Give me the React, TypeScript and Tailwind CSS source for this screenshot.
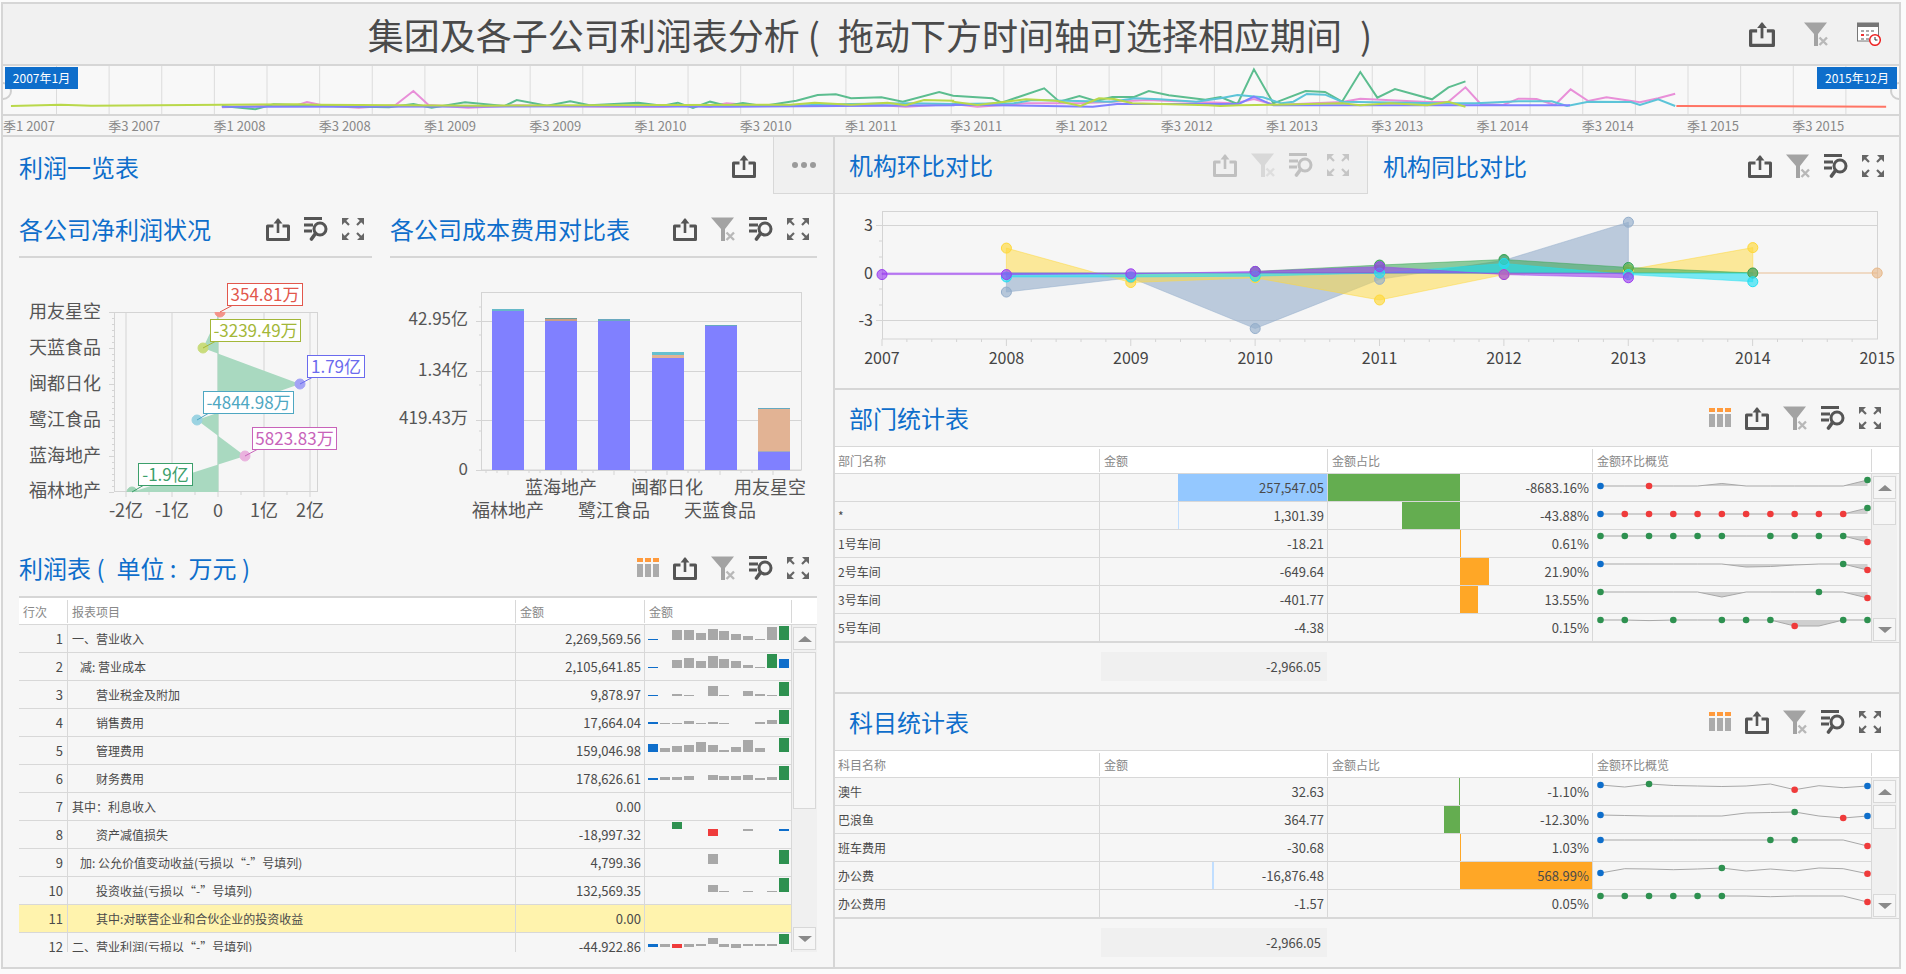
import React from "react";

function Share({ w = 24, h = 24, c = "#555" }: { w?: number; h?: number; c?: string }) {
  return (
    <svg width={w} height={h} viewBox="0 0 24 24" className="shrink-0">
      <path d="M7.5 9H1.5V22.5H22.5V9H16.5" fill="none" stroke={c} strokeWidth="3" strokeLinejoin="round" />
      <path d="M12 16V2.5" fill="none" stroke={c} strokeWidth="2.6" />
      <path d="M7.5 6.5L12 1L16.5 6.5Z" fill={c} />
    </svg>
  );
}
function FilterX({ w = 24, h = 24 }: { w?: number; h?: number }) {
  return (
    <svg width={w} height={h} viewBox="0 0 24 24" className="shrink-0">
      <path d="M0 0.5H23L14 12V24H10V12Z" fill="#a3a3a3" />
      <path d="M15.5 15.5L23 23M23 15.5L15.5 23" stroke="#b8b8b8" strokeWidth="2.4" fill="none" />
    </svg>
  );
}
function SearchList({ c = "#555" }: { c?: string }) {
  return (
    <svg width={24} height={24} viewBox="0 0 24 24" className="shrink-0">
      <path d="M0 1.5H18M0 8H9M0 14H8" stroke={c} strokeWidth="2.8" fill="none" />
      <circle cx="16" cy="12" r="6" fill="none" stroke={c} strokeWidth="3" />
      <path d="M11.5 16.5L7.5 22" stroke={c} strokeWidth="3.6" strokeLinecap="round" />
    </svg>
  );
}
function Expand({ c = "#666" }: { c?: string }) {
  return (
    <svg width={22} height={22} viewBox="0 0 22 22" className="shrink-0">
      <path d="M0 0H7L0 7ZM22 0H15L22 7ZM0 22H7L0 15ZM22 22H15L22 15Z" fill={c} />
      <path d="M2 2L7 7M20 2L15 7M2 20L7 15M20 20L15 15" stroke={c} strokeWidth="2.2" />
    </svg>
  );
}
function Columns() {
  return (
    <svg width={22} height={20} viewBox="0 0 22 20" className="shrink-0">
      <path d="M0 0H6V4H0ZM8 0H14V4H8ZM16 0H22V4H16Z" fill="#ff9a3c" />
      <path d="M0 6H6V19H0ZM8 6H14V19H8ZM16 6H22V19H16Z" fill="#ababab" />
    </svg>
  );
}
function Calendar() {
  return (
    <svg width={24} height={24} viewBox="0 0 24 24" className="shrink-0">
      <rect x="0.5" y="1" width="21" height="18" fill="#fff" stroke="#777" />
      <rect x="0.5" y="1" width="21" height="4" fill="#777" />
      <path d="M4 8h3v2H4zM9 8h3v2H9zM14 8h3v2h-3zM4 12h3v2H4zM9 12h3v2H9zM4 16h3v2H4zM9 16h3v2H9z" fill="#aaa" />
      <path d="M4 12h3v2H4z" fill="#e33" />
      <circle cx="18" cy="18" r="5.3" fill="#fff" stroke="#e22" strokeWidth="1.5" />
      <path d="M18 15V18H20.5" fill="none" stroke="#333" strokeWidth="1" />
    </svg>
  );
}

function Heading({ children }: { children: React.ReactNode }) {
  return <div className="text-[24px] leading-[32px] text-[#0e6ecb] whitespace-nowrap">{children}</div>;
}

/* ---------- timeline ---------- */
type Z = [number, number][];
const tl = (a: Z, b: Z) =>
  [...a.map(([x, y]) => `${x / 1.645},${y / 3}`), ...b.map(([x, y]) => `${953 + x / 1.645},${y / 3}`)].join(" ");

const tlSeries: { c: string; pts: string }[] = [
  {
    c: "#e88fd8",
    pts: tl(
      [[365,322],[490,315],[505,306],[530,316],[590,323],[650,316],[680,273],[705,315],[770,323],[850,316],[900,318],[1000,320],[1090,320],[1140,316],[1168,320],[1195,310],[1255,318],[1450,316],[1490,320],[1568,312]],
      [[0,312],[40,320],[120,310],[210,310],[320,300],[400,306],[465,310],[495,297],[530,315],[640,306],[670,296],[780,306],[815,305],[843,262],[868,312],[905,315],[930,296],[960,297],[990,315],[1016,268],[1045,303],[1075,292],[1130,307],[1160,295],[1188,281]]
    ),
  },
  {
    c: "#5cbd8f",
    pts: tl(
      [[365,318],[420,328],[450,313],[530,318],[640,322],[680,312],[710,323],[765,307],[830,318],[850,300],[900,317],[938,304],[970,316],[1050,308],[1090,317],[1115,308],[1140,324],[1168,305],[1195,317],[1222,309],[1255,318],[1310,302],[1345,285],[1375,283],[1400,295],[1450,292],[1485,305],[1545,276],[1568,287]],
      [[0,287],[65,295],[80,308],[150,265],[175,305],[208,288],[235,303],[262,291],[298,291],[322,273],[355,286],[415,299],[440,291],[468,312],[495,208],[527,310],[580,273],[612,276],[640,305],[670,216],[698,293],[727,267],[788,298],[815,262],[843,244]]
    ),
  },
  {
    c: "#5cc4d8",
    pts: tl(
      [[1000,318],[1290,317],[1400,312],[1500,310],[1568,312]],
      [[0,312],[100,310],[130,300],[260,305],[300,295],[340,298],[400,305],[440,295],[468,285],[510,292],[540,310],[560,305],[582,282],[612,284],[640,305],[800,310],[860,310],[930,304],[985,304],[1010,318],[1045,305],[1115,306],[1130,315],[1160,298],[1188,318]]
    ),
  },
  {
    c: "#8080ff",
    pts: tl(
      [[365,320],[1000,319],[1200,320],[1568,316]],
      [[0,314],[230,320],[270,312],[470,312],[495,290],[527,316],[700,316],[1015,316]]
    ),
  },
  {
    c: "#b9d84a",
    pts: tl(
      [[18,318],[100,314],[150,317],[490,313],[520,314],[800,317],[1300,314],[1340,308],[1400,314],[1460,308],[1490,316],[1520,300],[1568,302]],
      [[0,305],[40,315],[120,298],[170,302],[210,318],[240,295],[265,297],[295,310],[420,316],[440,318],[470,316],[527,314],[640,310],[670,316],[720,310],[780,316],[815,305],[843,320]]
    ),
  },
  { c: "#ff7565", pts: tl([], [[1190,318],[1535,320]]) },
];

function Timeline() {
  const labels: string[] = [];
  for (let y = 2007; y <= 2015; y++) labels.push(`季1 ${y}`, `季3 ${y}`);
  const grid = Array.from({ length: 35 }, (_, k) => 56.5 + 52.63 * k);
  return (
    <>
      <div className="relative h-[50px] bg-[#f8f8f8] border-b-2 border-[#d6d6d6] overflow-hidden">
        <svg width={1896} height={48} viewBox="3 66 1896 48" className="block">
          {grid.map((x) => (
            <line key={x} x1={x} x2={x} y1={66} y2={114} stroke="#dcdcdc" />
          ))}
          {tlSeries.map((s) => (
            <polyline key={s.c} points={s.pts} fill="none" stroke={s.c} strokeWidth="2" />
          ))}
          <circle cx="3" cy="91" r="8" fill="#f8f8f8" stroke="#cfcfcf" strokeWidth="2" />
          <circle cx="1899" cy="91" r="8" fill="#f8f8f8" stroke="#cfcfcf" strokeWidth="2" />
        </svg>
        <div className="absolute left-[2px] top-[1px] w-[73px] h-[22px] bg-[#0e6ecb] text-white text-[12px] leading-[22px] text-center">2007年1月</div>
        <div className="absolute left-[1814px] top-[1px] w-[80px] h-[22px] bg-[#0e6ecb] text-white text-[12px] leading-[22px] text-center">2015年12月</div>
      </div>
      <div className="flex h-[21px] border-b-2 border-[#d6d6d6] bg-[#f6f6f6] overflow-hidden">
        {labels.map((l) => (
          <div key={l} className="w-[105.26px] shrink-0 text-[13px] leading-[19px] text-[#888] whitespace-nowrap">{l}</div>
        ))}
      </div>
    </>
  );
}

/* ---------- charts ---------- */
function NetProfitChart() {
  const cats = ["用友星空", "天蓝食品", "闽都日化", "鹭江食品", "蓝海地产", "福林地产"];
  const ys = [311, 347, 383, 419, 455, 490];
  const pts: [number, number, string][] = [
    [220, 312, "#f4938a"],
    [203, 348, "#c9dc7c"],
    [300, 384, "#a3a3f5"],
    [197, 420, "#9bd3e2"],
    [245, 456, "#eab2de"],
    [132, 492, "#9fd3b5"],
  ];
  const boxes: [number, number, number, string, string, number, number][] = [
    [227, 283, 76, "354.81万", "#e2574c", 220, 312],
    [210, 319, 91, "-3239.49万", "#a3b738", 203, 348],
    [307, 355, 58, "1.79亿", "#6b6bee", 300, 384],
    [203, 391, 91, "-4844.98万", "#4ea7c2", 197, 420],
    [252, 427, 85, "5823.83万", "#c863ba", 245, 456],
    [138, 463, 55, "-1.9亿", "#3c9f6b", 132, 492],
  ];
  const minor = Array.from({ length: 31 }, (_, i) => 312 + i * 6);
  return (
    <svg width={353} height={282} viewBox="19 258 353 282" className="block">
      <defs>
        <clipPath id="cp1"><rect x="114" y="312" width="204" height="180" /></clipPath>
      </defs>
      <rect x="114.5" y="312.5" width="203" height="179" fill="none" stroke="#d4d4d4" />
      {[126, 172, 218, 264, 310].map((x) => (
        <g key={x}>
          <line x1={x} x2={x} y1={312} y2={497} stroke="#d4d4d4" />
          <text x={x} y={517} fontSize="18" fill="#555" textAnchor="middle">
            {x === 126 ? "-2亿" : x === 172 ? "-1亿" : x === 218 ? "0" : x === 264 ? "1亿" : "2亿"}
          </text>
        </g>
      ))}
      {[149, 195, 241, 287].map((x) => (
        <line key={x} x1={x} x2={x} y1={492} y2={495} stroke="#d4d4d4" />
      ))}
      {minor.map((y) => (
        <line key={y} x1={(y - 312) % 36 === 0 ? 109 : 112} x2={114} y1={y + 0.5} y2={y + 0.5} stroke="#d4d4d4" />
      ))}
      {cats.map((c, i) => (
        <text key={c} x={101} y={ys[i] + 7} fontSize="18" fill="#555" textAnchor="end">{c}</text>
      ))}
      <g clipPath="url(#cp1)">
        <polygon points={`218,312 ${pts.map((p) => `${p[0]},${p[1]}`).join(" ")} 218,492`} fill="#a9d9c0" />
        <line x1={218} x2={218} y1={312} y2={492} stroke="#a9d9c0" />
        {pts.map((p) => (
          <circle key={p[1]} cx={p[0]} cy={p[1]} r="5" fill={p[2]} stroke={p[2]} strokeWidth="1" />
        ))}
      </g>
      {boxes.map(([x, y, w, t, c, px, py]) => (
        <g key={t}>
          <line x1={px} y1={py} x2={x + 6} y2={y + 22} stroke={c} />
          <rect x={x + 0.5} y={y + 0.5} width={w - 1} height={22} fill="#fff" stroke={c} />
          <text x={x + w / 2} y={y + 17.5} fontSize="17" fill={c} textAnchor="middle">{t}</text>
        </g>
      ))}
    </svg>
  );
}

function CostChart() {
  const bars: { x: number; segs: [number, number, string][] }[] = [
    { x: 492, segs: [[309, 311, "#66b9c9"], [311, 470, "#8080ff"]] },
    { x: 545, segs: [[318, 319, "#6c9c9c"], [319, 321, "#c99f86"], [321, 470, "#8080ff"]] },
    { x: 598, segs: [[319, 321, "#6aa9c0"], [321, 470, "#8080ff"]] },
    { x: 652, segs: [[352, 355, "#66c0d0"], [355, 358, "#e2b394"], [358, 470, "#8080ff"]] },
    { x: 705, segs: [[325, 326, "#66a9c0"], [326, 470, "#8080ff"]] },
    { x: 758, segs: [[408, 409, "#66a9c0"], [409, 451, "#e2b394"], [451, 452, "#a8a8b8"], [452, 470, "#8080ff"]] },
  ];
  const top: [number, string][] = [[561, "蓝海地产"], [667, "闽都日化"], [770, "用友星空"]];
  const bottom: [number, string][] = [[508, "福林地产"], [614, "鹭江食品"], [720, "天蓝食品"]];
  const yl: [number, string][] = [[325, "42.95亿"], [376, "1.34亿"], [424, "419.43万"], [475, "0"]];
  return (
    <svg width={427} height={282} viewBox="390 258 427 282" className="block">
      <rect x="481.5" y="292.5" width="320" height="177.5" fill="none" stroke="#d4d4d4" />
      {[321, 371, 420, 470].map((y) => (
        <line key={y} x1={476} x2={801} y1={y + 0.5} y2={y + 0.5} stroke="#d4d4d4" />
      ))}
      {[335, 385, 431, 450, 307].map((y) => (
        <line key={y} x1={479} x2={481} y1={y} y2={y} stroke="#d4d4d4" />
      ))}
      {[508, 561, 614, 667, 720, 773].map((x) => (
        <line key={x} x1={x} x2={x} y1={470} y2={475} stroke="#d4d4d4" />
      ))}
      {[486, 497, 529, 540, 582, 593, 635, 646, 688, 699, 741, 752].map((x) => (
        <line key={x} x1={x} x2={x} y1={470} y2={473} stroke="#d4d4d4" />
      ))}
      {bars.map((b) =>
        b.segs.map(([a, z, c]) => <rect key={`${b.x}${a}`} x={b.x} y={a} width={32} height={z - a} fill={c} />)
      )}
      {yl.map(([y, t]) => (
        <text key={t} x={468} y={y} fontSize="17" fill="#555" textAnchor="end">{t}</text>
      ))}
      {top.map(([x, t]) => (
        <text key={t} x={x} y={494} fontSize="18" fill="#555" textAnchor="middle">{t}</text>
      ))}
      {bottom.map(([x, t]) => (
        <text key={t} x={x} y={517} fontSize="18" fill="#555" textAnchor="middle">{t}</text>
      ))}
    </svg>
  );
}

function CompareChart() {
  const X = (i: number) => 882 + i * 124.4;
  const Y = (v: number) => 273 - v * 15.87;
  const series: { c: string; o: number; d: [number, number][] }[] = [
    { c: "#94aecb", o: 0.6, d: [[1,-1.2],[2,-0.3],[3,-3.5],[4,-0.4],[5,0.8],[6,3.2]] },
    { c: "#ffd93b", o: 0.5, d: [[1,1.57],[2,-0.6],[3,-0.3],[4,-1.7],[5,-0.1],[6,0.2],[7,1.6]] },
    { c: "#e8b98a", o: 0.5, d: [[7,0],[8,0]] },
    { c: "#35a552", o: 0.55, d: [[3,0.1],[4,0.5],[5,0.85],[6,0.35],[7,0]] },
    { c: "#23dff2", o: 0.6, d: [[1,-0.25],[2,-0.25],[3,-0.2],[4,0],[5,0.6],[6,-0.1],[7,-0.55]] },
    { c: "#9b3ff0", o: 0.6, d: [[0,-0.1],[1,-0.1],[2,-0.05],[3,0.1],[4,0.4],[5,-0.1],[6,-0.3]] },
  ];
  return (
    <svg width={1064} height={194} viewBox="835 194 1064 194" className="block">
      <rect x="882.5" y="211.5" width="995" height="127.5" fill="none" stroke="#d4d4d4" />
      {[225, 320].map((y) => (
        <line key={y} x1={876} x2={1877} y1={y + 0.5} y2={y + 0.5} stroke="#d4d4d4" />
      ))}
      {Array.from({ length: 40 }, (_, i) => 882 + (i * 995) / 40).map((x, i) => (
        <line key={x} x1={x} x2={x} y1={339} y2={i % 5 === 0 ? 346 : 342} stroke="#d4d4d4" />
      ))}
      {[241, 257, 289, 305].map((y) => (
        <line key={y} x1={879} x2={882} y1={y} y2={y} stroke="#d4d4d4" />
      ))}
      {series.map((s) => {
        const first = s.d[0];
        const last = s.d[s.d.length - 1];
        const pts = s.d.map(([i, v]) => `${X(i)},${Y(v)}`).join(" ");
        return (
          <g key={s.c}>
            <polygon points={`${X(first[0])},${Y(0)} ${pts} ${X(last[0])},${Y(0)}`} fill={s.c} fillOpacity={s.o} stroke={s.c} strokeOpacity="0.5" />
          </g>
        );
      })}
      {series.map((s) =>
        s.d.map(([i, v]) => (
          <circle key={`${s.c}${i}`} cx={X(i)} cy={Y(v)} r="5" fill={s.c} fillOpacity="0.65" stroke={s.c} />
        ))
      )}
      {[["3", 231], ["0", 279], ["-3", 326]].map(([t, y]) => (
        <text key={t} x={873} y={y as number} fontSize="16" fill="#444" textAnchor="end">{t}</text>
      ))}
      {Array.from({ length: 9 }, (_, i) => (
        <text key={i} x={X(i)} y={364} fontSize="16" fill="#444" textAnchor="middle">{2007 + i}</text>
      ))}
    </svg>
  );
}

/* ---------- scrollbar ---------- */
function Scrollbar({ h, thumb, w, gap }: { h: number; thumb: number; w: number; gap: number }) {
  return (
    <div className="relative shrink-0 bg-[#f0f0f0]" style={{ height: h, width: w }}>
      <div className="absolute left-[1px] top-[2px] w-[23px] h-[23px] bg-[#f6f6f6] border border-[#d8d8d8] flex items-center justify-center">
        <div className="w-0 h-0 border-x-[7px] border-x-transparent border-b-[6px] border-b-[#8a8a8a]" />
      </div>
      <div className="absolute left-[1px] top-[27px] w-[23px] bg-[#f6f6f6] border border-[#d8d8d8]" style={{ height: thumb }} />
      <div className="absolute left-[1px] w-[23px] h-[23px] bg-[#f6f6f6] border border-[#d8d8d8] flex items-center justify-center" style={{ top: gap }}>
        <div className="w-0 h-0 border-x-[7px] border-x-transparent border-t-[6px] border-t-[#8a8a8a]" />
      </div>
    </div>
  );
}

/* ---------- income table ---------- */
const CB: Record<string, string> = { b: "#0e6ecb", g: "#2e9150", r: "#ef3b3b" };
function Bars({ base, h, c }: { base: number; h: number[]; c: Record<number, string> }) {
  const xs = [3, 15, 27, 39, 51, 63, 74, 86, 98, 110, 122, 134];
  return (
    <svg width={146} height={27} className="block">
      {h.map((v, i) =>
        v === 0 ? null : (
          <rect key={i} x={xs[i]} width={10} y={v > 0 ? base - v : base} height={Math.abs(v)} fill={c[i] ? CB[c[i]] : "#a8a8a8"} />
        )
      )}
    </svg>
  );
}

const incomeRows: { n: string; t: string; pl: string; v: string; base?: number; h?: number[]; c?: Record<number, string>; hl?: boolean }[] = [
  { n: "1", t: "一、营业收入", pl: "pl-[4px]", v: "2,269,569.56", base: 15, h: [1,0,10,10,7,11,9,6,4,1,13,14], c: { 0: "b", 11: "g" } },
  { n: "2", t: "减: 营业成本", pl: "pl-[12px]", v: "2,105,641.85", base: 15, h: [1,0,8,10,7,12,9,7,3,1,14,9], c: { 0: "b", 10: "g", 11: "b" } },
  { n: "3", t: "营业税金及附加", pl: "pl-[28px]", v: "9,878.97", base: 15, h: [1,0,2,1,0,10,1,0,5,2,1,14], c: { 0: "b", 11: "g" } },
  { n: "4", t: "销售费用", pl: "pl-[28px]", v: "17,664.04", base: 15, h: [2,1,1,3,1,2,1,0,0,2,4,14], c: { 0: "b", 11: "g" } },
  { n: "5", t: "管理费用", pl: "pl-[28px]", v: "159,046.98", base: 15, h: [8,4,6,7,10,7,2,5,12,4,0,14], c: { 0: "b", 11: "g" } },
  { n: "6", t: "财务费用", pl: "pl-[28px]", v: "178,626.61", base: 15, h: [2,3,3,4,0,5,4,4,5,2,3,14], c: { 0: "b", 11: "g" } },
  { n: "7", t: "其中：利息收入", pl: "pl-[4px]", v: "0.00" },
  { n: "8", t: "资产减值损失", pl: "pl-[28px]", v: "-18,997.32", base: 8, h: [0,0,7,0,0,-7,0,0,-2,0,0,-2], c: { 2: "g", 5: "r", 11: "b" } },
  { n: "9", t: "加: 公允价值变动收益(亏损以“-”号填列)", pl: "pl-[12px]", v: "4,799.36", base: 15, h: [0,0,0,0,0,10,0,0,0,0,0,14], c: { 11: "g" } },
  { n: "10", t: "投资收益(亏损以“-”号填列)", pl: "pl-[28px]", v: "132,569.35", base: 15, h: [0,0,0,0,0,7,1,0,1,0,1,14], c: { 11: "g" } },
  { n: "11", t: "其中:对联营企业和合伙企业的投资收益", pl: "pl-[28px]", v: "0.00", hl: true },
  { n: "12", t: "二、营业利润(亏损以“-”号填列)", pl: "pl-[4px]", v: "-44,922.86", base: 11, h: [-3,-3,-4,-3,-2,6,-3,-4,-2,-2,-2,10], c: { 0: "b", 2: "r", 11: "g" } },
];

function IncomeTable() {
  return (
    <div className="w-[798px] border-t-2 border-[#d6d6d6]">
      <div className="flex items-center h-[27px] bg-white border-b border-[#d8d8d8] text-[12px] text-[#888]">
        <div className="w-[49px] h-[23px] leading-[23px] pl-[4px] border-r border-[#d8d8d8]">行次</div>
        <div className="w-[448px] h-[23px] leading-[23px] pl-[4px] border-r border-[#d8d8d8]">报表项目</div>
        <div className="w-[129px] h-[23px] leading-[23px] pl-[4px] border-r border-[#d8d8d8]">金额</div>
        <div className="w-[147px] h-[23px] leading-[23px] pl-[4px] border-r border-[#d8d8d8]">金额</div>
      </div>
      <div className="flex h-[327px] overflow-hidden">
        <div className="w-[773px] shrink-0">
          {incomeRows.map((r) => (
            <div key={r.n} className={`flex h-[28px] shrink-0 border-b border-[#d8d8d8] text-[#4a4a4a] ${r.hl ? "bg-[#fff3ad]" : ""}`}>
              <div className="w-[49px] shrink-0 border-r border-[#d8d8d8] text-right pr-[4px] text-[13px] leading-[27px]">{r.n}</div>
              <div className={`w-[448px] shrink-0 border-r border-[#d8d8d8] text-[12px] leading-[27px] whitespace-nowrap ${r.pl}`}>{r.t}</div>
              <div className="w-[129px] shrink-0 border-r border-[#d8d8d8] text-right pr-[3px] text-[13px] leading-[27px]">{r.v}</div>
              <div className="w-[147px] shrink-0 border-r border-[#d8d8d8]">
                {r.h ? <Bars base={r.base!} h={r.h} c={r.c!} /> : null}
              </div>
            </div>
          ))}
        </div>
        <Scrollbar h={327} thumb={157} w={25} gap={302} />
      </div>
    </div>
  );
}

/* ---------- stats tables ---------- */
type Spark = { ys: number[]; dots: Record<number, string>; base?: number };
const flat = (v: number, o: Record<number, number>) => Array.from({ length: 12 }, (_, i) => (o[i] !== undefined ? o[i] : v));

function SparkLine({ s }: { s: Spark }) {
  const X = (i: number) => 7.5 + 24.27 * i;
  const pts = s.ys.map((y, i) => `${X(i)},${y}`).join(" ");
  return (
    <svg width={278} height={27} className="block">
      {s.base !== undefined ? (
        <polygon points={`${X(0)},${s.base} ${pts} ${X(11)},${s.base}`} fill="#cfcfcf" />
      ) : null}
      <polyline points={pts} fill="none" stroke="#a8a8a8" strokeWidth="1" />
      {Object.entries(s.dots).map(([i, c]) => (
        <circle key={i} cx={X(+i)} cy={s.ys[+i]} r="3.3" fill={CB[c]} />
      ))}
    </svg>
  );
}

type StatRow = { name: string; v: string; p: string; a?: [number, number]; neg?: [number, number]; pos?: [number, number]; s?: Spark };

function StatTable({ first, rows, bodyH }: { first: string; rows: StatRow[]; bodyH: number }) {
  return (
    <div className="border-t border-[#d8d8d8]">
      <div className="flex items-center h-[27px] bg-white border-b border-[#d8d8d8] text-[12px] text-[#888]">
        <div className="w-[265px] h-[23px] leading-[23px] pl-[3px] border-r border-[#d8d8d8]">{first}</div>
        <div className="w-[228px] h-[23px] leading-[23px] pl-[4px] border-r border-[#d8d8d8]">金额</div>
        <div className="w-[265px] h-[23px] leading-[23px] pl-[4px] border-r border-[#d8d8d8]">金额占比</div>
        <div className="w-[279px] h-[23px] leading-[23px] pl-[4px] border-r border-[#d8d8d8]">金额环比概览</div>
      </div>
      <div className="flex overflow-hidden border-b border-[#d8d8d8]" style={{ height: bodyH }}>
        <div className="w-[1037px] shrink-0">
          {rows.map((r, i) => (
            <div key={i} className="flex h-[28px] border-b border-[#d8d8d8] text-[#4a4a4a]">
              <div className="w-[265px] shrink-0 border-r border-[#d8d8d8] pl-[3px] text-[12px] leading-[27px] whitespace-nowrap">{r.name}</div>
              <div className="relative w-[228px] shrink-0 border-r border-[#d8d8d8] text-right pr-[3px] text-[13px] leading-[27px]">
                {r.a ? (
                  <div
                    className="absolute top-0 h-[27px]"
                    style={{ left: r.a[0], width: r.a[1], backgroundColor: r.a[1] < 5 ? "#c0deff" : "#94c8ff" }}
                  />
                ) : null}
                <span className="relative">{r.v}</span>
              </div>
              <div className="relative w-[265px] shrink-0 border-r border-[#d8d8d8] text-right pr-[3px] text-[13px] leading-[27px]">
                {r.neg ? <div className="absolute top-0 h-[27px] bg-[#64ad50]" style={{ left: r.neg[0], width: r.neg[1] }} /> : null}
                {r.pos ? <div className="absolute top-0 h-[27px] bg-[#ffa726]" style={{ left: r.pos[0], width: r.pos[1] }} /> : null}
                <span className="relative">{r.p}</span>
              </div>
              <div className="w-[279px] shrink-0 border-r border-[#d8d8d8]">{r.s ? <SparkLine s={r.s} /> : null}</div>
            </div>
          ))}
        </div>
        <Scrollbar h={bodyH} thumb={24} w={25} gap={bodyH - 25} />
      </div>
      <div className="pl-[266px] pt-[9px]">
        <div className="w-[226px] h-[29px] bg-[#f0f0f0] text-right pr-[6px] text-[13px] leading-[29px] text-[#4a4a4a]">-2,966.05</div>
      </div>
    </div>
  );
}

const deptRows: StatRow[] = [
  { name: "", v: "257,547.05", p: "-8683.16%", a: [78, 149], neg: [0, 132], s: { ys: flat(12, { 5: 9.5, 11: 6 }), dots: { 0: "b", 2: "r", 11: "g" }, base: 12 } },
  { name: "*", v: "1,301.39", p: "-43.88%", a: [78, 1], neg: [74, 58], s: { ys: flat(12, { 11: 6 }), dots: { 0: "b", 1: "r", 2: "r", 3: "r", 4: "r", 5: "r", 6: "r", 7: "r", 8: "r", 9: "r", 10: "r", 11: "g" }, base: 12 } },
  { name: "1号车间", v: "-18.21", p: "0.61%", pos: [132, 1], s: { ys: flat(6, { 11: 12 }), dots: { 0: "g", 1: "g", 2: "g", 3: "g", 4: "g", 5: "g", 7: "g", 8: "g", 9: "g", 10: "g", 11: "r" }, base: 6 } },
  { name: "2号车间", v: "-649.64", p: "21.90%", pos: [132, 29], s: { ys: flat(6, { 6: 9, 7: 8.5, 8: 7, 11: 12 }), dots: { 0: "b", 10: "g", 11: "r" }, base: 6 } },
  { name: "3号车间", v: "-401.77", p: "13.55%", pos: [132, 18], s: { ys: flat(6, { 5: 11, 11: 12 }), dots: { 0: "g", 9: "g", 11: "r" }, base: 6 } },
  { name: "5号车间", v: "-4.38", p: "0.15%", s: { ys: flat(6, { 2: 6.6, 8: 12, 9: 12 }), dots: { 0: "g", 1: "g", 3: "g", 5: "g", 6: "g", 7: "g", 8: "r", 10: "g", 11: "g" }, base: 6 } },
  { name: "", v: "", p: "", pos: [132, 97] },
];
const subjRows: StatRow[] = [
  { name: "澳牛", v: "32.63", p: "-1.10%", neg: [131, 1], s: { ys: [7, 9, 6, 7.5, 8, 8.5, 8, 6, 11.7, 7.7, 9.7, 8], dots: { 0: "b", 2: "g", 8: "r", 11: "b" } } },
  { name: "巴浪鱼", v: "364.77", p: "-12.30%", neg: [116, 16], s: { ys: [9, 9.5, 10, 10, 10, 10, 7, 6.5, 6, 10, 12, 10], dots: { 0: "b", 8: "g", 10: "r", 11: "b" } } },
  { name: "班车费用", v: "-30.68", p: "1.03%", pos: [132, 1], s: { ys: flat(6, { 11: 12 }), dots: { 0: "b", 7: "g", 8: "g", 11: "r" } } },
  { name: "办公费", v: "-16,876.48", p: "568.99%", a: [112, 2], pos: [132, 132], s: { ys: [11, 6.7, 7, 7.7, 7, 6, 9, 7, 9, 6, 6.7, 11.7], dots: { 0: "b", 5: "g", 11: "r" } } },
  { name: "办公费用", v: "-1.57", p: "0.05%", s: { ys: flat(6, { 7: 6.7, 11: 12 }), dots: { 0: "g", 1: "g", 2: "g", 3: "g", 4: "g", 5: "g", 11: "r" } } },
  { name: "", v: "", p: "", pos: [132, 3] },
];

function TableIcons() {
  return (
    <div className="flex items-center gap-[14px] pr-[18px]">
      <Columns />
      <Share />
      <FilterX />
      <SearchList />
      <Expand />
    </div>
  );
}

export default function App() {
  return (
    <div className="w-[1906px] h-[974px] bg-[#fbfbfb] pl-[1px] pt-[2px] overflow-hidden [font-family:'Noto_Sans_CJK_SC',sans-serif]">
      <div className="w-[1900px] h-[967px] border-2 border-[#d6d6d6] bg-[#f6f6f6] flex flex-col overflow-hidden">
        {/* title */}
        <div className="flex items-center h-[62px] shrink-0 bg-[#f1f1f1] border-b-2 border-[#d6d6d6]">
          <div className="w-[1734px] text-center text-[36px] leading-[50px] text-[#4a4a4a] whitespace-nowrap">
            {"集团及各子公司利润表分析 (\u2002拖动下方时间轴可选择相应期间\u2002)"}
          </div>
          <div className="flex items-center gap-[29px] pl-[12px]">
            <Share w={26} h={26} />
            <FilterX />
            <Calendar />
          </div>
        </div>
        <Timeline />

        {/* main */}
        <div className="flex flex-1 min-h-0">
          {/* left */}
          <div className="w-[832px] shrink-0 border-r-2 border-[#d6d6d6] flex flex-col">
            <div className="flex h-[57px] shrink-0 items-center justify-between pl-[16px]">
              <div className="pt-[3px]"><Heading>利润一览表</Heading></div>
              <div className="flex items-center h-full">
                <Share />
                <div className="w-[60px] h-full ml-[17px] bg-[#f0f0f0] border-l border-b border-[#d8d8d8] flex items-center justify-center gap-[3px]">
                  <div className="w-[6px] h-[6px] rounded-full bg-[#9a9a9a]" />
                  <div className="w-[6px] h-[6px] rounded-full bg-[#9a9a9a]" />
                  <div className="w-[6px] h-[6px] rounded-full bg-[#9a9a9a]" />
                </div>
              </div>
            </div>
            <div className="flex pl-[16px] gap-[18px] shrink-0">
              <div className="w-[353px]">
                <div className="flex h-[64px] items-center justify-between pt-[8px] border-b-2 border-[#d6d6d6]">
                  <Heading>各公司净利润状况</Heading>
                  <div className="flex items-center gap-[14px] pr-[8px]">
                    <Share />
                    <SearchList />
                    <Expand />
                  </div>
                </div>
                <NetProfitChart />
              </div>
              <div className="w-[427px]">
                <div className="flex h-[64px] items-center justify-between pt-[8px] border-b-2 border-[#d6d6d6]">
                  <Heading>各公司成本费用对比表</Heading>
                  <div className="flex items-center gap-[14px] pr-[8px]">
                    <Share />
                    <FilterX />
                    <SearchList />
                    <Expand />
                  </div>
                </div>
                <CostChart />
              </div>
            </div>
            <div className="pl-[16px]">
              <div className="flex h-[56px] w-[798px] items-center justify-between">
                <Heading>{"利润表 (\u2002单位 :\u2002万元 )"}</Heading>
                <div className="flex items-center gap-[14px] pr-[8px]">
                  <Columns />
                  <Share />
                  <FilterX />
                  <SearchList />
                  <Expand />
                </div>
              </div>
              <IncomeTable />
            </div>
          </div>

          {/* right */}
          <div className="flex-1 min-w-0 flex flex-col">
            <div className="h-[253px] shrink-0 border-b-2 border-[#d6d6d6]">
              <div className="flex h-[57px]">
                <div className="w-[533px] bg-[#f0f0f0] border-r border-b border-[#d8d8d8] flex items-center justify-between pl-[14px] pr-[18px]">
                  <Heading>机构环比对比</Heading>
                  <div className="flex items-center gap-[14px] opacity-30">
                    <Share />
                    <FilterX />
                    <SearchList />
                    <Expand />
                  </div>
                </div>
                <div className="flex-1 flex items-center justify-between pl-[15px] pr-[15px]">
                  <Heading>机构同比对比</Heading>
                  <div className="flex items-center gap-[14px]">
                    <Share />
                    <FilterX />
                    <SearchList />
                    <Expand />
                  </div>
                </div>
              </div>
              <CompareChart />
            </div>

            <div className="h-[304px] shrink-0 border-b-2 border-[#d6d6d6]">
              <div className="flex h-[56px] items-center justify-between pl-[14px]">
                <Heading>部门统计表</Heading>
                <TableIcons />
              </div>
              <StatTable first="部门名称" rows={deptRows} bodyH={169} />
            </div>

            <div className="flex-1 min-h-0">
              <div className="flex h-[56px] items-center justify-between pl-[14px]">
                <Heading>科目统计表</Heading>
                <TableIcons />
              </div>
              <StatTable first="科目名称" rows={subjRows} bodyH={141} />
            </div>
          </div>
        </div>
      </div>
    </div>
  );
}
